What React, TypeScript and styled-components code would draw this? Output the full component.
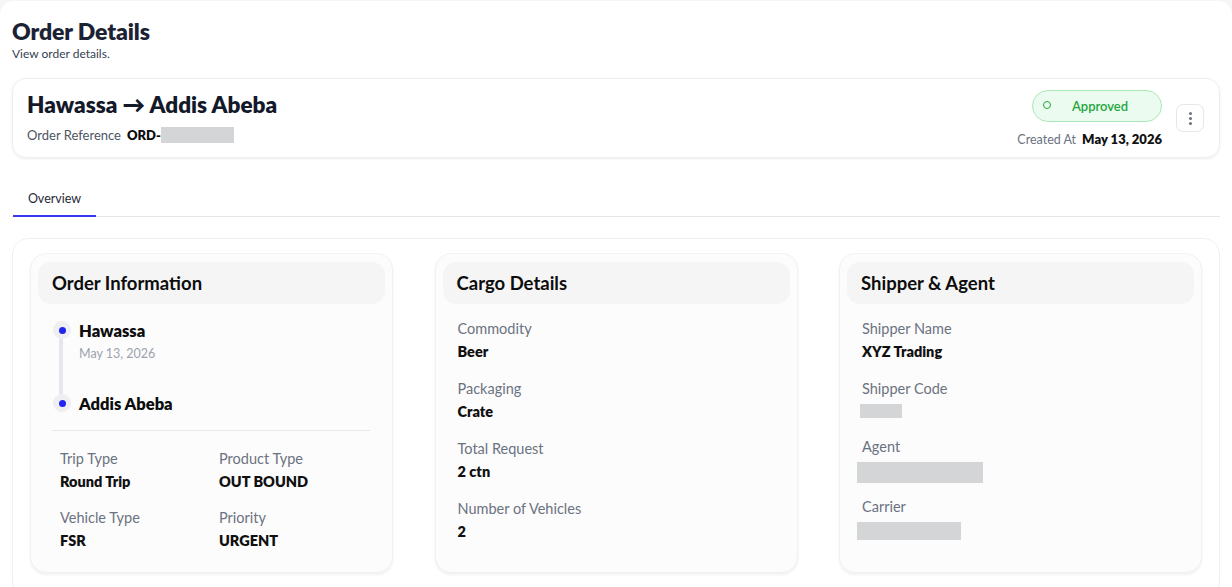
import React from 'react'
import styled, { createGlobalStyle } from 'styled-components'

const GlobalStyle = createGlobalStyle`
  html, body {
    margin: 0;
    padding: 0;
    background: #f6f6f7;
    font-family: Lato, "Noto Sans", sans-serif;
    color: #111827;
  }
`

const Page = styled.div`
  background: #ffffff;
  border-radius: 14px;
  min-height: 586px;
  margin-top: 1px;
  padding: 17px 12px 0 12px;
  box-sizing: border-box;
  overflow: hidden;
`

const PageTitle = styled.h1`
  margin: 0;
  font-size: 23px;
  line-height: 27px;
  font-weight: 800;
  color: #1b2233;
  letter-spacing: -0.1px;
`

const PageSub = styled.div`
  font-size: 12px;
  line-height: 14px;
  color: #374151;
  margin-top: 2px;
`

const HeaderCard = styled.div`
  margin-top: 17px;
  height: 80px;
  box-sizing: border-box;
  border: 1px solid #eeeeee;
  border-radius: 14px;
  box-shadow: 0 1px 3px rgba(0, 0, 0, 0.08);
  display: flex;
  justify-content: space-between;
  align-items: flex-start;
  padding: 12px 15px 0 14px;
`

const RouteTitle = styled.div`
  font-size: 22.5px;
  line-height: 27px;
  font-weight: 800;
  color: #14192a;
`

const RefRow = styled.div`
  display: flex;
  align-items: center;
  margin-top: 9px;
  font-size: 13px;
  color: #4b5563;
`

const RefValue = styled.span`
  font-weight: 800;
  color: #0b0b0b;
  margin-left: 6px;
`

const Redacted = styled.span<{ w: number; h: number }>`
  display: inline-block;
  width: ${({ w }) => w}px;
  height: ${({ h }) => h}px;
  background: #d4d5d7;
`

const HeaderRight = styled.div`
  display: flex;
  align-items: flex-start;
  gap: 14px;
`

const StatusCol = styled.div`
  display: flex;
  flex-direction: column;
  align-items: flex-end;
  margin-top: -1px;
`

const Pill = styled.div`
  width: 130px;
  height: 32px;
  box-sizing: border-box;
  border: 1px solid #a9e9b8;
  background: #ecfbef;
  border-radius: 16px;
  display: flex;
  align-items: center;
  padding: 0 0 0 10px;
  color: #22a83f;
  font-size: 13px;
  font-weight: 600;
`

const PillDot = styled.span`
  width: 6px;
  height: 6px;
  border: 1.5px solid #22a83f;
  border-radius: 50%;
  margin-top: -3px;
`

const PillText = styled.span`
  flex: 1;
  text-align: center;
  margin-right: 12px;
`

const CreatedRow = styled.div`
  margin-top: 9px;
  font-size: 12.5px;
  color: #6b7280;
  display: flex;
  align-items: center;
`

const CreatedValue = styled.span`
  font-weight: 800;
  color: #111111;
  font-size: 13px;
  margin-left: 6px;
`

const KebabButton = styled.button`
  margin-top: 13px;
  width: 28px;
  height: 28px;
  border: 1px solid #e5e7eb;
  background: #ffffff;
  border-radius: 7px;
  display: flex;
  flex-direction: column;
  align-items: center;
  justify-content: center;
  gap: 2px;
  padding: 0;
`

const KebabDot = styled.span`
  width: 3px;
  height: 3px;
  border-radius: 50%;
  background: #6b7280;
`

const Tabs = styled.div`
  margin-top: 20px;
  display: flex;
  border-bottom: 1px solid #e6e6e8;
`

const Tab = styled.div<{ active?: boolean }>`
  padding: 13px 0 9px 0;
  width: 83px;
  margin-left: 1px;
  box-sizing: border-box;
  text-align: center;
  font-size: 12.5px;
  color: #1f2937;
  border-bottom: 2px solid ${({ active }) => (active ? '#3a3af0' : 'transparent')};
  margin-bottom: -1px;
`

const ContentCard = styled.div`
  margin-top: 21px;
  border: 1px solid #f0f0f0;
  border-radius: 16px;
  padding: 14px 17px 24px 17px;
  display: grid;
  grid-template-columns: 363px 363px 363px;
  justify-content: space-between;
  align-items: stretch;
`

const Section = styled.div`
  background: #fcfcfc;
  border: 1px solid #f1f1f1;
  border-radius: 16px;
  box-shadow: 0 2px 3px rgba(0, 0, 0, 0.06);
  padding: 8px 7px 0 7px;
  min-height: 320px;
  box-sizing: border-box;
`

const SectionHead = styled.div`
  background: #f5f5f5;
  border-radius: 13px;
  height: 42px;
  display: flex;
  align-items: center;
  padding-left: 14px;
  font-size: 18.5px;
  font-weight: 700;
  color: #0d0d0d;
`

const SectionBody = styled.div<{ pad?: number }>`
  padding: 16px ${({ pad }) => pad ?? 15}px 0 ${({ pad }) => pad ?? 15}px;
`

const Timeline = styled.div`
  position: relative;
  padding-left: 26px;
  padding-bottom: 16px;
`

const TimelineLine = styled.div`
  position: absolute;
  left: 6px;
  top: 11px;
  width: 4px;
  height: 80px;
  background: #e6e6ef;
`

const Stop = styled.div<{ gap: number }>`
  position: relative;
  margin-bottom: ${({ gap }) => gap}px;
`

const StopDot = styled.span`
  position: absolute;
  left: -26px;
  top: 0;
  width: 18px;
  height: 18px;
  border-radius: 50%;
  background: #efeff3;
  display: flex;
  align-items: center;
  justify-content: center;
  &::after {
    content: '';
    width: 7px;
    height: 7px;
    border-radius: 50%;
    background: #2424f0;
  }
`

const StopName = styled.div`
  font-size: 16.5px;
  line-height: 20px;
  font-weight: 800;
  color: #0d0d0d;
`

const StopDate = styled.div`
  font-size: 12.5px;
  color: #9ca3af;
  margin-top: 5px;
`

const Divider = styled.div`
  height: 1px;
  background: #e8e8ea;
  margin: 0 0 0 -1px;
`

const InfoGrid = styled.div`
  display: grid;
  grid-template-columns: 159px 1fr;
  row-gap: 19px;
  padding: 19px 0 0 7px;
`

const Field = styled.div<{ gap?: number }>`
  margin-bottom: ${({ gap }) => gap ?? 0}px;
`

const Label = styled.div`
  font-size: 14.5px;
  line-height: 17px;
  color: #6b7280;
`

const Value = styled.div`
  font-size: 14.5px;
  line-height: 17px;
  font-weight: 800;
  color: #101010;
  margin-top: 6px;
`

const RedactedValue = styled.div<{ shift: number }>`
  margin-top: 7px;
  margin-left: ${({ shift }) => shift}px;
  display: flex;
`

const cargo = [
  { label: 'Commodity', value: 'Beer' },
  { label: 'Packaging', value: 'Crate' },
  { label: 'Total Request', value: '2 ctn' },
  { label: 'Number of Vehicles', value: '2' },
]

const trip = [
  { label: 'Trip Type', value: 'Round Trip' },
  { label: 'Product Type', value: 'OUT BOUND' },
  { label: 'Vehicle Type', value: 'FSR' },
  { label: 'Priority', value: 'URGENT' },
]

export default function App() {
  return (
    <>
      <GlobalStyle />
      <Page>
        <PageTitle>Order Details</PageTitle>
        <PageSub>View order details.</PageSub>

        <HeaderCard>
          <div>
            <RouteTitle>Hawassa → Addis Abeba</RouteTitle>
            <RefRow>
              Order Reference
              <RefValue>ORD-</RefValue>
              <Redacted w={73} h={16} />
            </RefRow>
          </div>
          <HeaderRight>
            <StatusCol>
              <Pill>
                <PillDot />
                <PillText>Approved</PillText>
              </Pill>
              <CreatedRow>
                Created At <CreatedValue>May 13, 2026</CreatedValue>
              </CreatedRow>
            </StatusCol>
            <KebabButton aria-label="More">
              <KebabDot />
              <KebabDot />
              <KebabDot />
            </KebabButton>
          </HeaderRight>
        </HeaderCard>

        <Tabs>
          <Tab active>Overview</Tab>
        </Tabs>

        <ContentCard>
          <Section>
            <SectionHead>Order Information</SectionHead>
            <SectionBody pad={15}>
              <Timeline>
                <TimelineLine />
                <Stop gap={33} style={{ marginTop: 1 }}>
                  <StopDot />
                  <StopName>Hawassa</StopName>
                  <StopDate>May 13, 2026</StopDate>
                </Stop>
                <Stop gap={0}>
                  <StopDot />
                  <StopName>Addis Abeba</StopName>
                </Stop>
              </Timeline>
              <Divider />
              <InfoGrid>
                {trip.map((f) => (
                  <Field key={f.label}>
                    <Label>{f.label}</Label>
                    <Value>{f.value}</Value>
                  </Field>
                ))}
              </InfoGrid>
            </SectionBody>
          </Section>

          <Section>
            <SectionHead>Cargo Details</SectionHead>
            <SectionBody>
              {cargo.map((f) => (
                <Field key={f.label} gap={20}>
                  <Label>{f.label}</Label>
                  <Value>{f.value}</Value>
                </Field>
              ))}
            </SectionBody>
          </Section>

          <Section>
            <SectionHead>Shipper &amp; Agent</SectionHead>
            <SectionBody>
              <Field gap={20}>
                <Label>Shipper Name</Label>
                <Value>XYZ Trading</Value>
              </Field>
              <Field gap={20}>
                <Label>Shipper Code</Label>
                <RedactedValue shift={-2}>
                  <Redacted w={42} h={14} />
                </RedactedValue>
              </Field>
              <Field gap={15}>
                <Label>Agent</Label>
                <RedactedValue shift={-5}>
                  <Redacted w={126} h={21} />
                </RedactedValue>
              </Field>
              <Field>
                <Label>Carrier</Label>
                <RedactedValue shift={-5}>
                  <Redacted w={104} h={18} />
                </RedactedValue>
              </Field>
            </SectionBody>
          </Section>
        </ContentCard>
      </Page>
    </>
  )
}
